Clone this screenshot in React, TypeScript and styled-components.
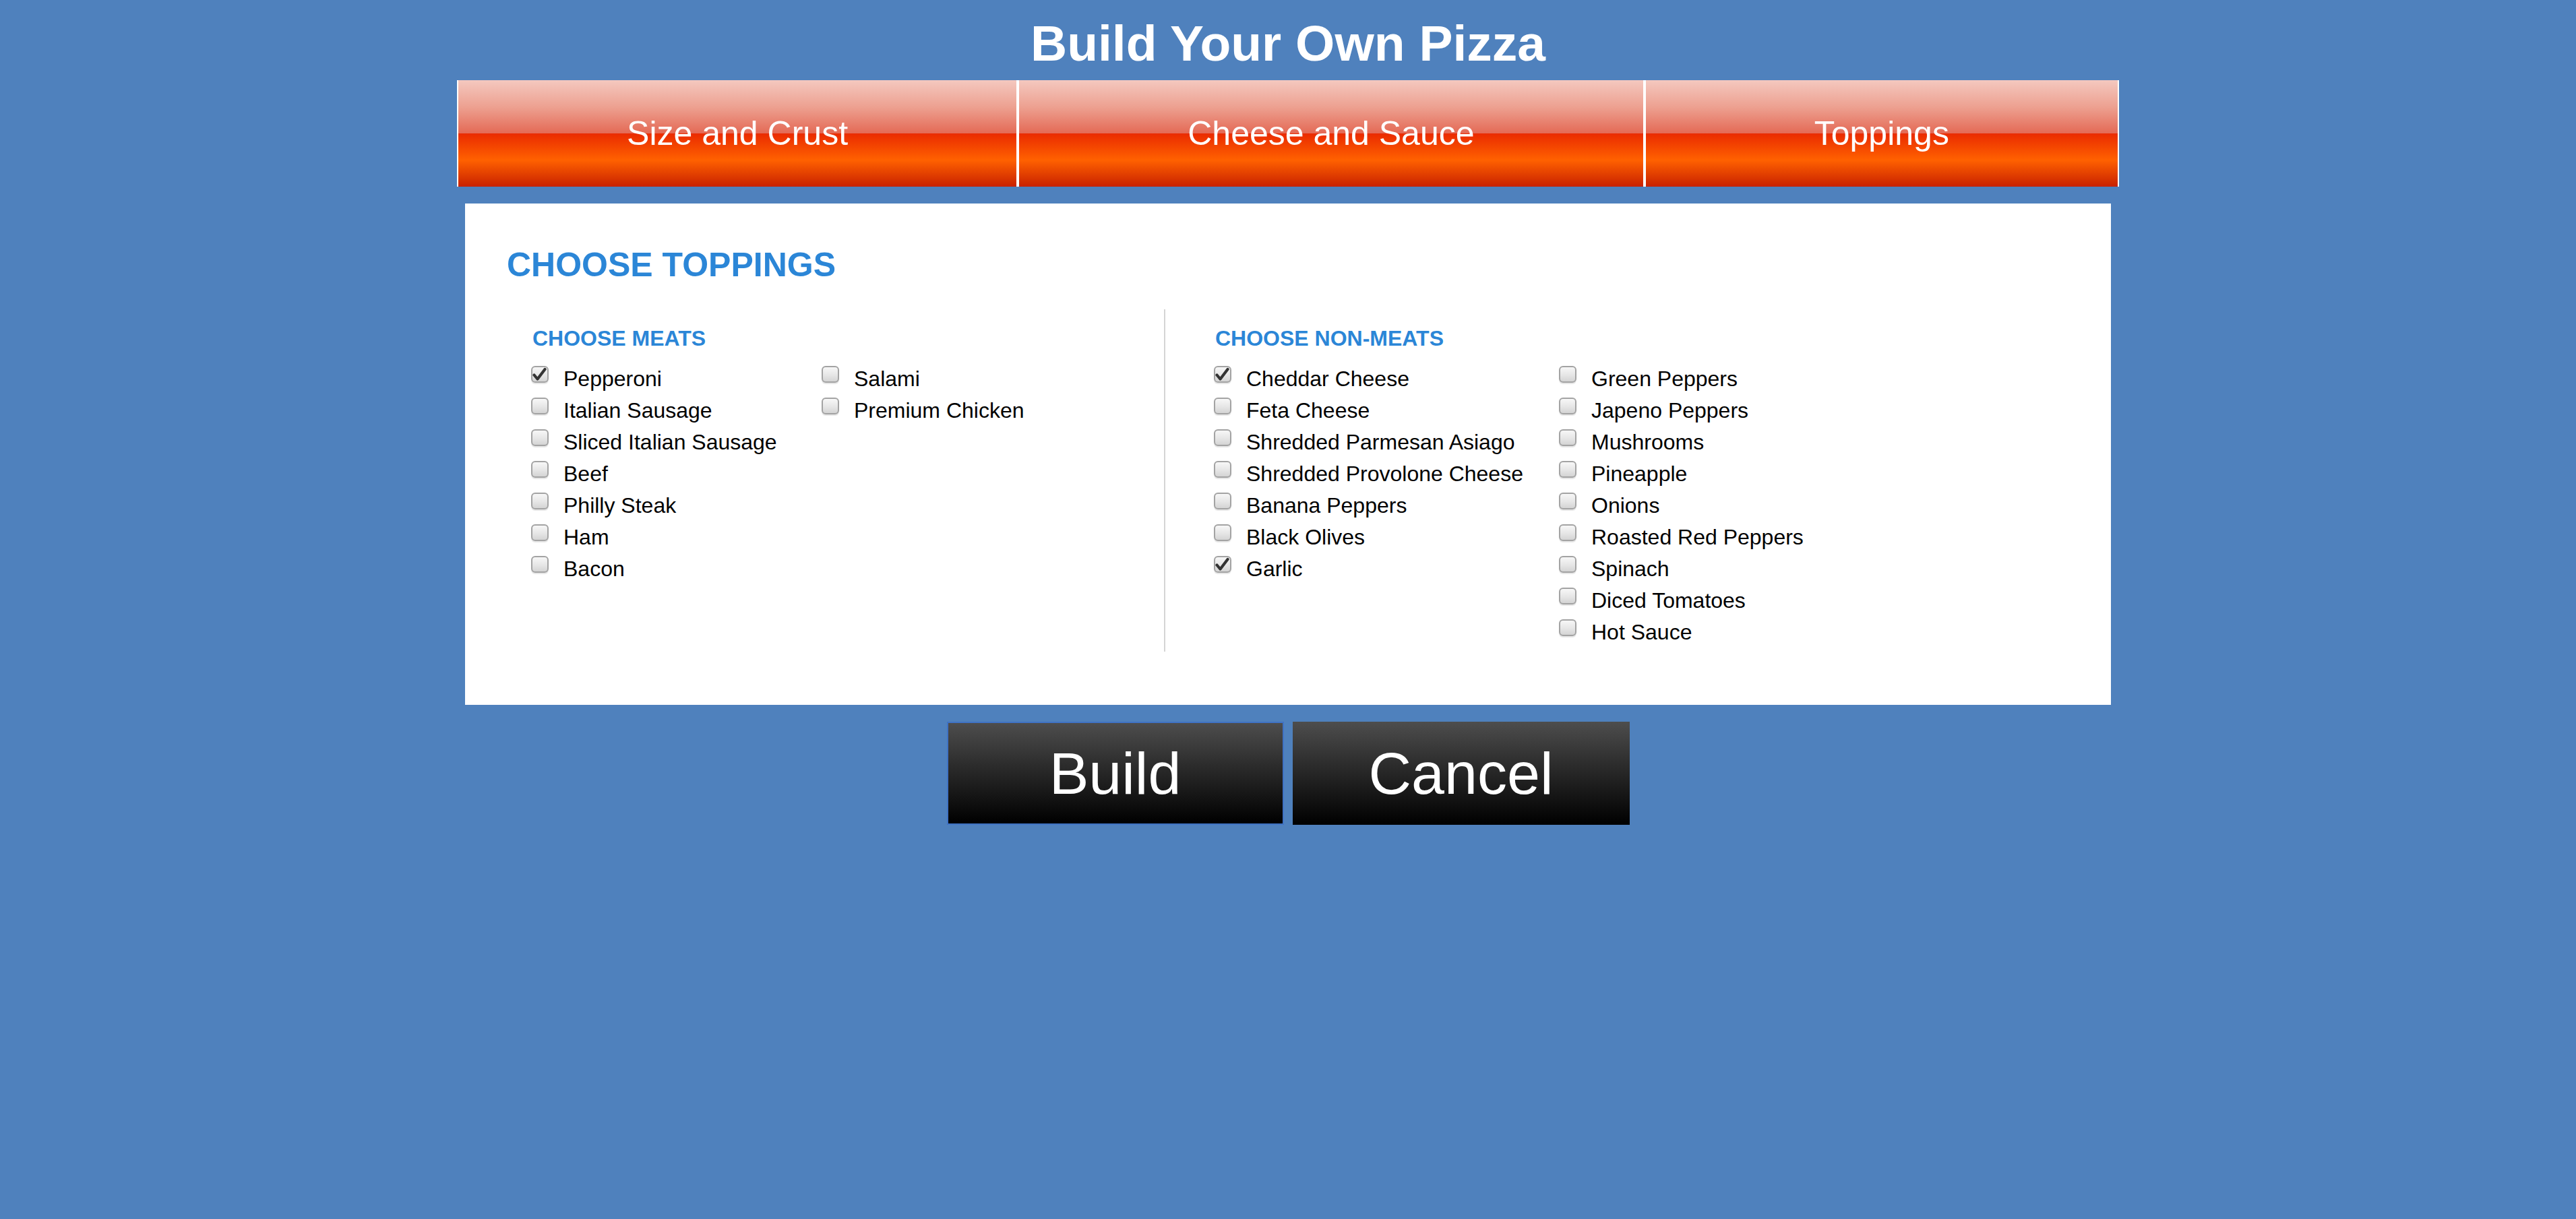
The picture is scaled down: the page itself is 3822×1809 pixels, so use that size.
import React from "react";
import styled, { createGlobalStyle } from "styled-components";

const GlobalStyle = createGlobalStyle`
  html, body {
    margin: 0;
    padding: 0;
    background: #4f81bd;
    font-family: "Liberation Sans", Arial, sans-serif;
  }
  * { box-sizing: border-box; }
`;

const Page = styled.div`
  min-height: 100vh;
  padding-top: 21px;
  background: #4f81bd;
`;

const Title = styled.h1`
  margin: 0;
  text-align: center;
  color: #ffffff;
  font-size: 75px;
  font-weight: bold;
  line-height: 86px;
`;

const TabBar = styled.nav`
  display: flex;
  width: 2466px;
  height: 158px;
  margin: 12px auto 0;
`;

const Tab = styled.div`
  flex: 1 1 auto;
  display: flex;
  align-items: center;
  justify-content: center;
  border-left: 2px solid #ffffff;
  border-right: 2px solid #ffffff;
  background: linear-gradient(
    to bottom,
    #f4c8bf 0%,
    #eda191 25%,
    #e46a56 49.8%,
    #ea2b00 50.2%,
    #ff6100 75%,
    #c82100 100%
  );
  color: #ffffff;
  font-size: 50px;
  line-height: 57px;
  white-space: nowrap;
`;

const Panel = styled.section`
  width: 2442px;
  margin: 25px auto 0;
  background: #ffffff;
  padding: 66px 0 79px 62px;
`;

const PanelTitle = styled.h2`
  margin: 0 0 41px;
  color: #2b86d7;
  font-size: 50px;
  line-height: 50px;
  font-weight: bold;
`;

const Groups = styled.div`
  display: flex;
  align-items: stretch;
`;

const Group = styled.div<{ $width?: number; $padLeft: number; $divider?: boolean }>`
  flex: ${(p) => (p.$width ? `0 0 ${p.$width}px` : "1 1 auto")};
  padding: 26.6px 0 5px ${(p) => p.$padLeft}px;
  border-left: ${(p) => (p.$divider ? "2px solid #d4d4d4" : "none")};
`;

const GroupTitle = styled.h3`
  margin: 0 0 21px 2px;
  color: #2b86d7;
  font-size: 32px;
  line-height: 32px;
  font-weight: bold;
`;

const Columns = styled.div`
  display: flex;
`;

const Column = styled.ul<{ $width?: number }>`
  list-style: none;
  margin: 0;
  padding: 0;
  flex: ${(p) => (p.$width ? `0 0 ${p.$width}px` : "1 1 auto")};
`;

const Option = styled.li`
  display: flex;
  align-items: flex-start;
  height: 47.1px;
  font-size: 32px;
  line-height: 47.1px;
  color: #000000;
  white-space: nowrap;
`;

const Box = styled.span`
  flex: 0 0 auto;
  width: 26px;
  height: 25px;
  margin-top: 4px;
  margin-right: 22px;
  border: 2px solid #a3a3a3;
  border-radius: 6px;
  background: linear-gradient(to bottom, #f7f7f7 0%, #e6e6e6 55%, #d4d4d4 100%);
  box-shadow: 0 2px 1px rgba(0, 0, 0, 0.1);
  display: flex;
  align-items: center;
  justify-content: center;
`;

const ButtonRow = styled.div`
  display: flex;
  justify-content: center;
  gap: 13px;
  margin-top: 25px;
`;

const ActionButton = styled.button<{ $focused?: boolean }>`
  width: 500px;
  height: 153px;
  padding: 0;
  border: ${(p) => (p.$focused ? "2px solid #3f72c4" : "none")};
  background: linear-gradient(to bottom, #4d4d4d 0%, #262626 50%, #000000 100%);
  color: #ffffff;
  font-family: "Liberation Sans", Arial, sans-serif;
  font-size: 88px;
  line-height: 1;
  cursor: pointer;
`;

const Check = () => (
  <svg width="22" height="21" viewBox="0 0 22 21">
    <path
      d="M2.5 11.5 L7.5 17.5 L18.5 3"
      fill="none"
      stroke="#333333"
      strokeWidth="4.2"
      strokeLinecap="round"
      strokeLinejoin="round"
    />
  </svg>
);

type Item = { label: string; checked?: boolean };

const Checkbox: React.FC<Item> = ({ label, checked }) => (
  <Option>
    <Box>{checked ? <Check /> : null}</Box>
    {label}
  </Option>
);

const meats1: Item[] = [
  { label: "Pepperoni", checked: true },
  { label: "Italian Sausage" },
  { label: "Sliced Italian Sausage" },
  { label: "Beef" },
  { label: "Philly Steak" },
  { label: "Ham" },
  { label: "Bacon" },
];
const meats2: Item[] = [{ label: "Salami" }, { label: "Premium Chicken" }];

const non1: Item[] = [
  { label: "Cheddar Cheese", checked: true },
  { label: "Feta Cheese" },
  { label: "Shredded Parmesan Asiago" },
  { label: "Shredded Provolone Cheese" },
  { label: "Banana Peppers" },
  { label: "Black Olives" },
  { label: "Garlic", checked: true },
];
const non2: Item[] = [
  { label: "Green Peppers" },
  { label: "Japeno Peppers" },
  { label: "Mushrooms" },
  { label: "Pineapple" },
  { label: "Onions" },
  { label: "Roasted Red Peppers" },
  { label: "Spinach" },
  { label: "Diced Tomatoes" },
  { label: "Hot Sauce" },
];

export default function App() {
  return (
    <>
      <GlobalStyle />
      <Page>
        <Title>Build Your Own Pizza</Title>
        <TabBar>
          <Tab>Size and Crust</Tab>
          <Tab>Cheese and Sauce</Tab>
          <Tab>Toppings</Tab>
        </TabBar>
        <Panel>
          <PanelTitle>CHOOSE TOPPINGS</PanelTitle>
          <Groups>
            <Group $width={975} $padLeft={36}>
              <GroupTitle>CHOOSE MEATS</GroupTitle>
              <Columns>
                <Column $width={431}>
                  {meats1.map((m) => (
                    <Checkbox key={m.label} {...m} />
                  ))}
                </Column>
                <Column>
                  {meats2.map((m) => (
                    <Checkbox key={m.label} {...m} />
                  ))}
                </Column>
              </Columns>
            </Group>
            <Group $padLeft={72} $divider>
              <GroupTitle>CHOOSE NON-MEATS</GroupTitle>
              <Columns>
                <Column $width={512}>
                  {non1.map((m) => (
                    <Checkbox key={m.label} {...m} />
                  ))}
                </Column>
                <Column>
                  {non2.map((m) => (
                    <Checkbox key={m.label} {...m} />
                  ))}
                </Column>
              </Columns>
            </Group>
          </Groups>
        </Panel>
        <ButtonRow>
          <ActionButton $focused>Build</ActionButton>
          <ActionButton>Cancel</ActionButton>
        </ButtonRow>
      </Page>
    </>
  );
}
